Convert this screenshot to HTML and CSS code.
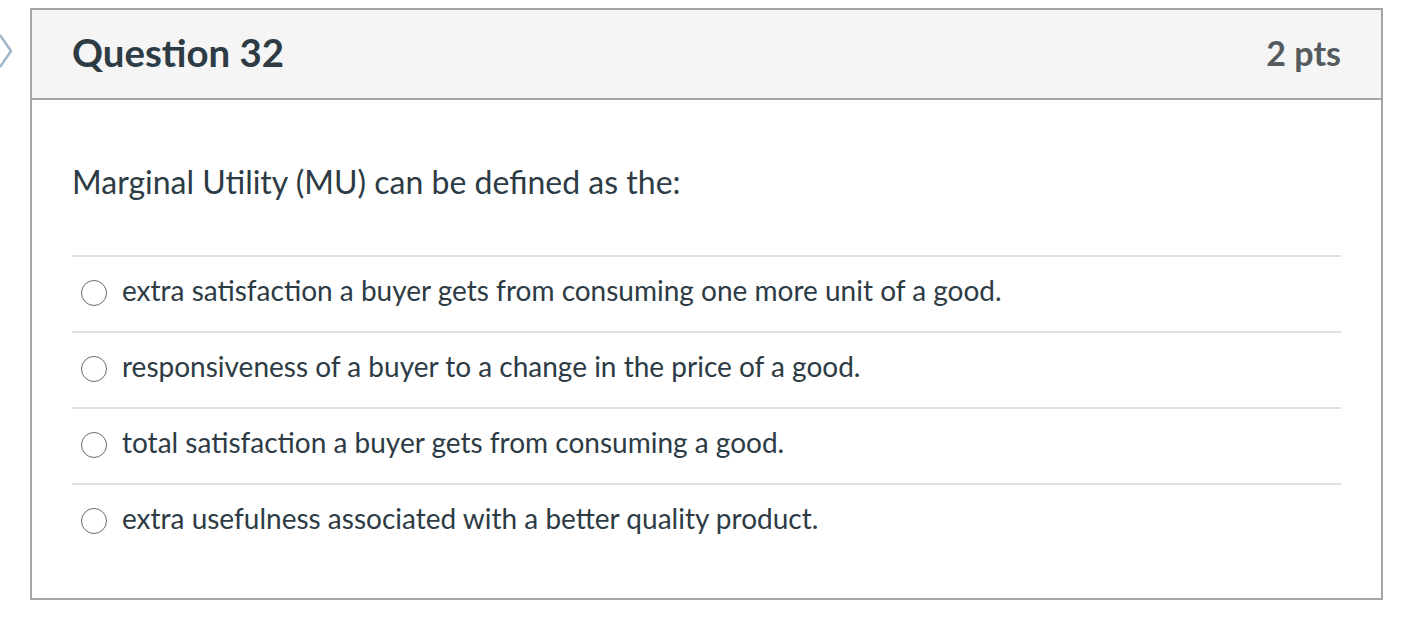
FILE: index.html
```html
<!DOCTYPE html>
<html>
<head>
<meta charset="utf-8">
<link rel="stylesheet" href="styles.css">
</head>
<body>
<div class="page">
  <svg class="nav-chevron" width="14" height="36" viewBox="0 0 14 36">
    <polyline points="0,2 11,18 0,34" fill="none" stroke="#a3b7cb" stroke-width="2.6" stroke-linejoin="round"/>
  </svg>
  <div class="question">
    <div class="q-header">
      <h2 class="q-title">Question 32</h2>
      <span class="q-pts">2 pts</span>
    </div>
    <div class="q-body">
      <p class="q-text">Marginal Utility (MU) can be defined as the:</p>
      <div class="answers">
        <label class="answer"><span class="radio"></span><span class="a-text">extra satisfaction a buyer gets from consuming one more unit of a good.</span></label>
        <label class="answer"><span class="radio"></span><span class="a-text">responsiveness of a buyer to a change in the price of a good.</span></label>
        <label class="answer"><span class="radio"></span><span class="a-text">total satisfaction a buyer gets from consuming a good.</span></label>
        <label class="answer"><span class="radio"></span><span class="a-text">extra usefulness associated with a better quality product.</span></label>
      </div>
    </div>
  </div>
</div>
</body>
</html>
```

FILE: styles.css
```css
html, body {
  margin: 0;
  padding: 0;
  background: #ffffff;
}
body {
  font-family: Lato, "Open Sans", "Liberation Sans", sans-serif;
  color: #2d3b45;
}
.page {
  position: relative;
  padding: 8px 0 0 30px;
}
.nav-chevron {
  position: absolute;
  left: 0;
  top: 33px;
}
.question {
  width: 1353px;
  height: 592px;
  box-sizing: border-box;
  border: 2px solid #a5a5a5;
  display: flex;
  flex-direction: column;
}
.q-header {
  height: 90px;
  box-sizing: border-box;
  background: #f5f5f5;
  border-bottom: 2px solid #a5a5a5;
  display: flex;
  align-items: center;
  justify-content: space-between;
  padding: 0 40px 4px 40px;
}
.q-title {
  margin: 0;
  font-size: 38.4px;
  font-weight: 700;
  color: #2d3b45;
}
.q-pts {
  font-size: 34px;
  font-weight: 700;
  color: #555a5e;
}
.q-body {
  padding: 61px 40px 0 40px;
}
.q-text {
  margin: 0 0 52px 0;
  font-size: 32px;
  line-height: 42px;
}
.answers {
  display: flex;
  flex-direction: column;
}
.answer {
  display: flex;
  align-items: center;
  height: 76px;
  box-sizing: border-box;
  border-top: 2px solid #e0e0e0;
  padding: 0 0 8px 9px;
}
.radio {
  width: 26px;
  height: 26px;
  box-sizing: border-box;
  border: 1px solid #6b6b6b;
  border-radius: 50%;
  background: #fff;
  margin: 6px 15px 0 0;
  flex: none;
}
.a-text {
  font-size: 28px;
}
```
